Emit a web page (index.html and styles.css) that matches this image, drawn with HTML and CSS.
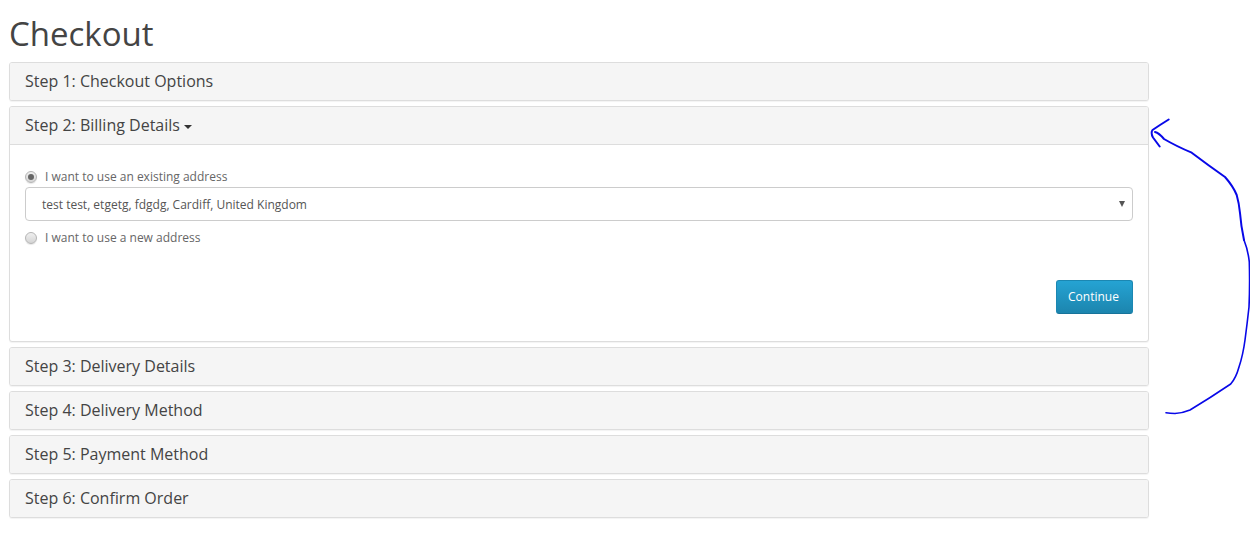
FILE: index.html
```html
<!DOCTYPE html>
<html lang="en">
<head>
<meta charset="utf-8">
<title>Checkout</title>
<link rel="stylesheet" href="styles.css">
</head>
<body>
<main class="page">
  <h1 class="title">Checkout</h1>
  <section class="panel"><h2 class="panel-heading">Step 1: Checkout Options</h2></section>
  <section class="panel">
    <h2 class="panel-heading open"><a class="step-link" href="#">Step 2: Billing Details <span class="caret"></span></a></h2>
    <div class="panel-body">
      <label class="radio-row"><span class="radio checked"></span>I want to use an existing address</label>
      <div class="select">test test, etgetg, fdgdg, Cardiff, United Kingdom<span class="select-arrow"></span></div>
      <label class="radio-row second"><span class="radio"></span>I want to use a new address</label>
      <div class="actions"><button class="btn" type="button">Continue</button></div>
    </div>
  </section>
  <section class="panel"><h2 class="panel-heading">Step 3: Delivery Details</h2></section>
  <section class="panel"><h2 class="panel-heading">Step 4: Delivery Method</h2></section>
  <section class="panel"><h2 class="panel-heading">Step 5: Payment Method</h2></section>
  <section class="panel"><h2 class="panel-heading">Step 6: Confirm Order</h2></section>
</main>
<svg class="scribble" width="1250" height="534" viewBox="0 0 1250 534" aria-hidden="true">
  <path class="ink thick" d="M1168.7 119.5 L1160 125 L1152.5 130 Q1150.5 133 1153 137.5 L1159.7 146.5"/>
  <path class="ink thick" d="M1155 132 Q1159 133 1164 139 Q1176 146 1191.7 152.7 Q1208 165 1225 177 Q1233 186 1236.7 195 Q1239 203 1240 213 Q1241 226 1244 240"/>
  <path class="ink" d="M1244 240 Q1248 250 1249.3 262 Q1250 285 1249 307 Q1247 325 1245 340 Q1243 355 1239 367 Q1236 378 1230.7 384 Q1210 398 1190 410 Q1183 413 1175 413.5 Q1170 413.5 1166 412.7"/>
</svg>
</body>
</html>
```
FILE: styles.css
```css
* { box-sizing: border-box; }
html, body { margin: 0; padding: 0; background: #fff; }
body {
  font-family: "Open Sans", sans-serif;
  font-size: 12px;
  color: #666;
  height: 534px;
  overflow: hidden;
}
.page {
  width: 1140px;
  margin-left: 9px;
  padding-top: 13px;
}
.title {
  margin: 0 0 8px;
  font-size: 33px;
  font-weight: 400;
  line-height: 41px;
  color: #444;
}
.panel {
  border: 1px solid #ddd;
  border-radius: 3px;
  background: #fff;
  box-shadow: 0 1px 1px rgba(0, 0, 0, .05);
  margin-bottom: 5px;
}
.panel-heading {
  margin: 0;
  height: 37px;
  padding: 0 15px;
  background: #f5f5f5;
  border-radius: 2px;
  font-size: 16px;
  font-weight: 400;
  line-height: 36px;
  color: #444;
}
.panel-heading.open {
  height: 38px;
  border-bottom: 1px solid #ddd;
  border-radius: 2px 2px 0 0;
}
.step-link { color: #444; text-decoration: none; }
.caret {
  display: inline-block;
  width: 0;
  height: 0;
  margin-left: 0;
  vertical-align: middle;
  border-top: 4px solid #333;
  border-left: 4px solid transparent;
  border-right: 4px solid transparent;
}
.panel-body {
  padding: 24px 15px 0;
  height: 196px;
}
.radio-row {
  display: flex;
  align-items: center;
  gap: 8px;
  height: 16px;
  line-height: 16px;
}
.radio-row.second { margin-top: 9px; }
.radio {
  width: 12px;
  height: 12px;
  border: 1px solid #b5b5b5;
  border-radius: 50%;
  background: linear-gradient(#f0f0f0, #d4d4d4);
  box-shadow: 0 1px 1px rgba(0,0,0,.1);
  display: flex;
  align-items: center;
  justify-content: center;
}
.radio.checked::after {
  content: "";
  width: 6px;
  height: 6px;
  border-radius: 50%;
  background: #666;
}
.select {
  position: relative;
  margin-top: 2px;
  height: 34px;
  border: 1px solid #ccc;
  border-radius: 4px;
  padding-left: 16px;
  line-height: 33px;
  color: #555;
  background: #fff;
}
.select-arrow {
  position: absolute;
  right: 7px;
  top: 13px;
  border-top: 6px solid #555;
  border-left: 3px solid transparent;
  border-right: 3px solid transparent;
}
.actions {
  display: flex;
  justify-content: flex-end;
  margin-top: 34px;
}
.btn {
  width: 77px;
  height: 34px;
  padding: 0 2px 0 0;
  border: 1px solid #1b87b2;
  border-bottom-color: #17739a;
  border-radius: 3px;
  background: linear-gradient(#25a3d3, #1c85ae);
  color: #fff;
  font-family: "Open Sans", sans-serif;
  font-size: 12px;
  line-height: 32px;
}
.scribble {
  position: absolute;
  left: 0;
  top: 0;
  pointer-events: none;
}
.ink {
  fill: none;
  stroke: #0808e8;
  stroke-width: 1.6;
  stroke-linecap: round;
  stroke-linejoin: round;
}
.ink.thick { stroke-width: 2; }
```
